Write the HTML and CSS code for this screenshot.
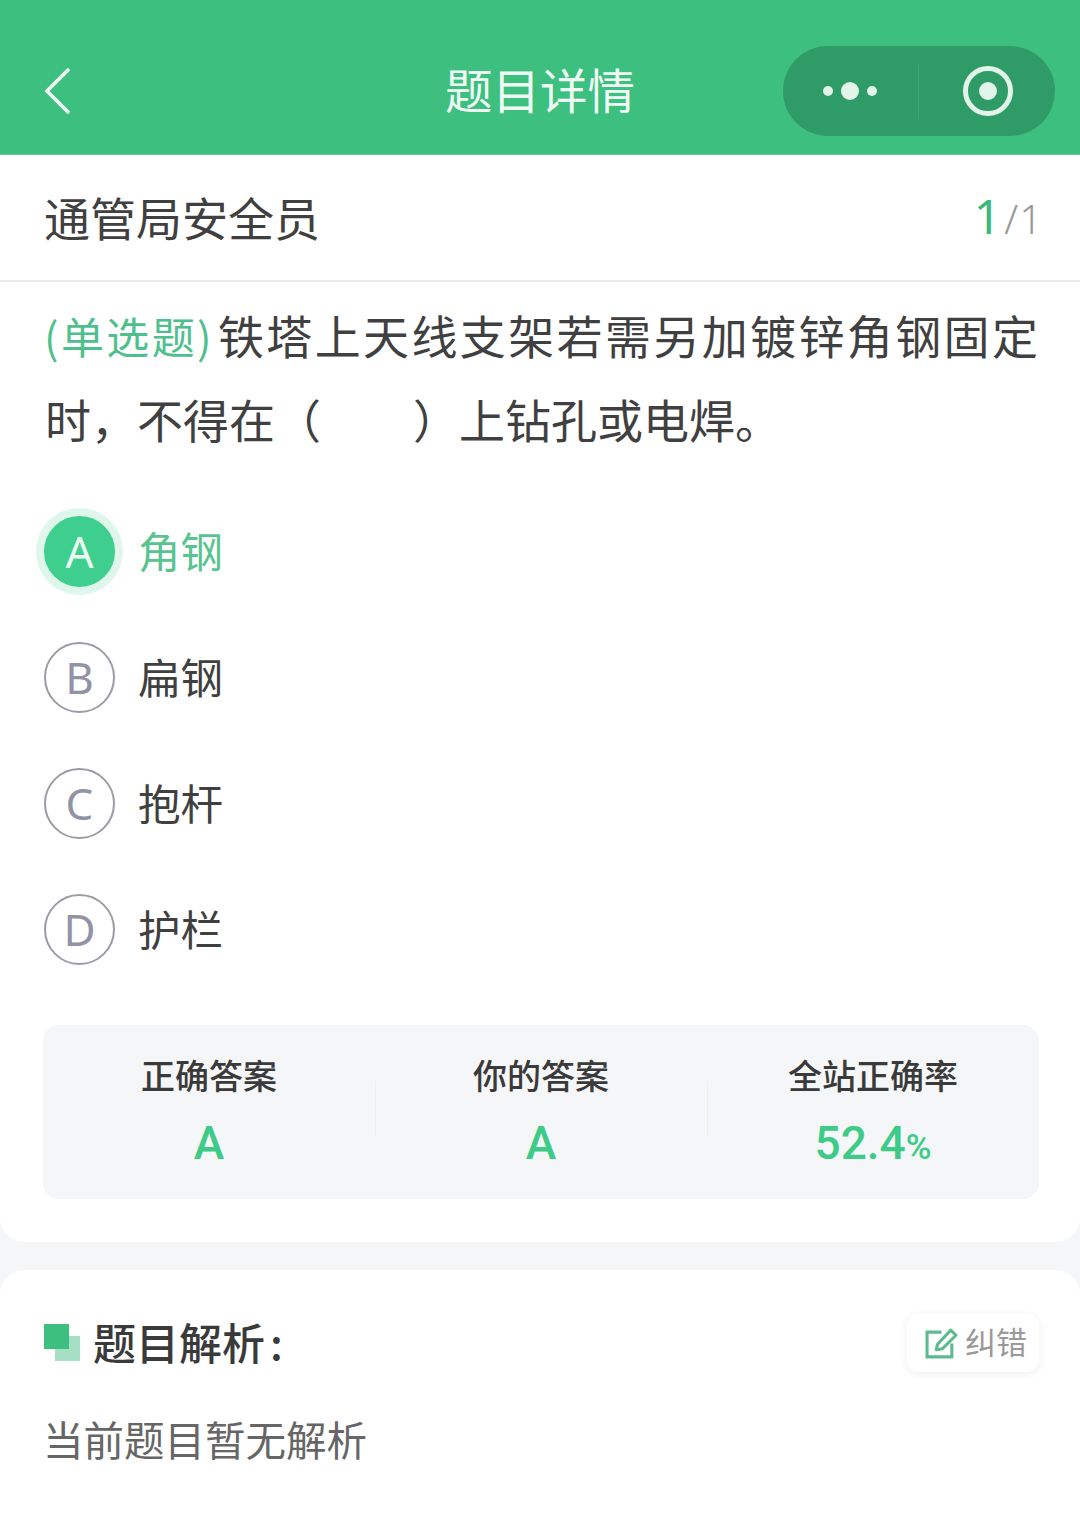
FILE: index.html

```html
<!DOCTYPE html>
<html lang="zh-CN">
<head>
  <meta charset="UTF-8">
  <title>题目详情</title>
  <link rel="stylesheet" href="styles.css">
</head>
<body>
  <header class="navbar">
    <svg class="back-icon" width="28" height="48" viewBox="0 0 28 48"><path d="M25 2 L3 24 L25 46" fill="none" stroke="#f0faf4" stroke-width="3.6"/></svg>
    <div class="nav-title">题目详情</div>
    <div class="capsule">
      <div class="capsule-part">
        <svg width="54" height="18" viewBox="0 0 54 18"><circle cx="5" cy="9" r="5" fill="#e2f3e9"/><circle cx="27" cy="9" r="9" fill="#e2f3e9"/><circle cx="49" cy="9" r="5" fill="#e2f3e9"/></svg>
      </div>
      <div class="capsule-line"></div>
      <div class="capsule-part">
        <svg width="52" height="52" viewBox="0 0 52 52"><circle cx="26" cy="26" r="22.5" fill="none" stroke="#e2f3e9" stroke-width="5"/><circle cx="26" cy="26" r="9" fill="#e2f3e9"/></svg>
      </div>
    </div>
  </header>

  <section class="card question-card">
    <div class="paper-row">
      <div class="paper-name">通管局安全员</div>
      <div class="paper-count"><span class="count-now">1</span><span class="count-sep">/</span>1</div>
    </div>
    <div class="question"><span class="q-type">(单选题)</span>铁塔上天线支架若需另加镀锌角钢固定时，不得在（　　）上钻孔或电焊。</div>

    <div class="options">
      <div class="option option-right"><div class="option-mark">A</div><div class="option-text">角钢</div></div>
      <div class="option"><div class="option-mark">B</div><div class="option-text">扁钢</div></div>
      <div class="option"><div class="option-mark">C</div><div class="option-text">抱杆</div></div>
      <div class="option"><div class="option-mark">D</div><div class="option-text">护栏</div></div>
    </div>

    <div class="stats">
      <div class="stat">
        <div class="stat-label">正确答案</div>
        <div class="stat-value">A</div>
      </div>
      <div class="stat">
        <div class="stat-label">你的答案</div>
        <div class="stat-value">A</div>
      </div>
      <div class="stat">
        <div class="stat-label">全站正确率</div>
        <div class="stat-value">52.4<span class="stat-unit">%</span></div>
      </div>
    </div>
  </section>

  <section class="card analysis-card">
    <div class="analysis-head">
      <div class="analysis-title">
        <div class="square-icon"><i class="square-back"></i><i class="square-front"></i></div>
        <span>题目解析<span class="colon">:</span></span>
      </div>
      <div class="report-btn">
        <svg width="33" height="33" viewBox="0 0 32 32"><path d="M16 5 H2 V29 H26 V16" fill="none" stroke="#5dbb8f" stroke-width="3"/><path d="M12 17 L25 3 L30 8 L17 21 L11 22 Z" fill="none" stroke="#5dbb8f" stroke-width="3" stroke-linejoin="round"/></svg>
        <span class="report-text">纠错</span>
      </div>
    </div>
    <div class="analysis-body">当前题目暂无解析</div>
  </section>
</body>
</html>
```

FILE: styles.css

```css
html, body { margin: 0; padding: 0; }
body { width: 1080px; height: 1528px; overflow: hidden; background: #f4f6f8; font-family: "Noto Sans CJK SC", "Noto Sans", sans-serif; color: #3a3a3a; }

.navbar { position: relative; height: 155px; background: #3cbf7f; display: flex; align-items: center; padding: 0 25px 0 44px; box-sizing: border-box; border-bottom: 1px solid #62cc98; }
.back-icon { margin-top: 27px; }
.nav-title { position: absolute; left: 0; right: 0; top: 55px; text-align: center; font-size: 47.5px; line-height: 68px; color: #f0faf4; font-weight: 400; }
.capsule { margin-left: auto; margin-top: 27px; width: 272px; height: 90px; border-radius: 45px; background: #2f9b67; display: flex; align-items: center; }
.capsule-part { flex: 1; display: flex; align-items: center; justify-content: center; }
.capsule-part:first-child { padding-right: 1px; }
.capsule-line { width: 1px; height: 56px; background: #3aa673; }
.capsule-line + .capsule-part { padding-left: 2px; }

.card { background: #fff; }
.question-card { height: 1087px; border-radius: 0 0 24px 24px; }
.paper-row { height: 125px; display: flex; align-items: center; justify-content: space-between; padding: 0 38px 0 44px; border-bottom: 2px solid #ebebeb; }
.paper-name { font-size: 46px; line-height: 60px; margin-top: -4px; font-weight: 400; color: #404040; }
.paper-count { font-size: 40px; line-height: 60px; color: #999; font-family: "Noto Sans", sans-serif; font-weight: 300; }
.count-now { font-size: 48px; color: #3cb87c; font-weight: 400; }
.count-sep { margin: 0 1px 0 3px; }

.question { padding: 11px 42px 0 45px; font-size: 46px; line-height: 83px; text-align: justify; font-weight: 400; color: #404040; }
.q-type { color: #4fc08d; font-size: 43px; margin: 0 4px 0 -1px; }

.options { margin-top: 28px; }
.option { height: 126px; display: flex; align-items: center; padding-left: 44px; }
.option-mark { width: 67px; height: 67px; border: 2.5px solid #9b9ca6; border-radius: 50%; display: flex; align-items: center; justify-content: center; font-size: 44px; font-weight: 400; color: #9194a6; font-family: "Noto Sans", sans-serif; }
.option-text { margin-left: 23px; margin-top: -4px; font-size: 42.5px; font-weight: 400; color: #404040; }
.option-right .option-mark { background: #3ecf8e; border-color: #3ecf8e; color: #eafaf2; box-shadow: 0 0 0 8px #dff6ea; }
.option-right .option-text { color: #5ac491; }

.stats { margin: 33px 41px 0 43px; height: 174px; border-radius: 16px; background: #f4f6f8; display: flex; }
.stat { flex: 1; text-align: center; position: relative; }
.stat + .stat::before { content: ""; position: absolute; left: 0; top: 56px; height: 56px; width: 1px; background: #eceef0; }
.stat-label { margin-top: 25px; font-size: 34px; line-height: 50px; color: #3a3a3a; font-weight: 500; }
.stat-value { margin-top: 13px; font-size: 46px; line-height: 60px; font-weight: 500; color: #3ecb88; font-family: Roboto, sans-serif; }
.stat-unit { font-size: 35px; }

.analysis-card { margin-top: 28px; height: 258px; border-radius: 24px 24px 0 0; padding: 0 41px 0 44px; }
.analysis-head { padding-top: 44px; display: flex; justify-content: space-between; align-items: center; }
.analysis-title { display: flex; align-items: center; gap: 13px; font-size: 43px; line-height: 58px; font-weight: 500; color: #3a3a3a; }
.analysis-title > span { margin-top: -4px; }
.colon { margin-left: 5px; }
.square-icon { position: relative; width: 36px; height: 37px; margin-top: -2px; }
.square-icon i { position: absolute; display: block; width: 25px; height: 25px; }
.square-front { left: 0; top: 0; background: #3cbf7f; }
.square-back { right: 0; bottom: 0; background: #a5e0c4; }
.report-btn { display: flex; align-items: center; gap: 7px; width: 132px; height: 58px; box-sizing: border-box; padding-left: 6px; justify-content: center; border-radius: 12px; background: #fff; box-shadow: 0 2px 10px rgba(0,0,0,0.07); font-size: 31px; color: #999; }
.report-text { margin-top: -5px; }
.analysis-body { margin-top: 38px; margin-left: -1px; font-size: 40.5px; line-height: 58px; font-weight: 400; color: #666; }
```
